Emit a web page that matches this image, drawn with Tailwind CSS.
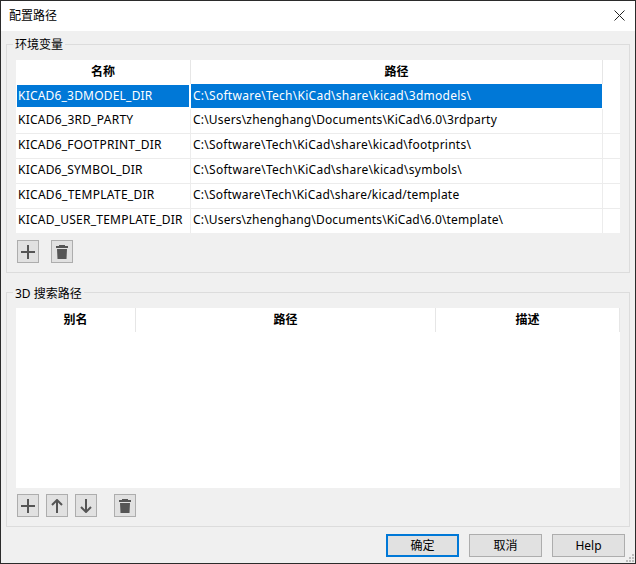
<!DOCTYPE html>
<html lang="zh-CN">
<head>
<meta charset="UTF-8">
<title>配置路径</title>
<script src="https://cdn.jsdelivr.net/npm/@tailwindcss/browser@4"></script>
</head>
<body class="m-0 overflow-hidden">
<div class="w-[636px] h-[564px] flex flex-col bg-[#f0f0f0] border border-[#2b2b2b] text-[12px] text-black font-['Noto_Sans','Noto_Sans_CJK_SC',sans-serif] relative">
  <!-- title bar -->
  <div class="h-[30px] bg-white flex items-center justify-between pl-[8px] pr-[10px] shrink-0">
    <span class="text-[12px]">配置路径</span>
    <svg class="mb-[1px]" width="11" height="11" viewBox="0 0 11 11" fill="none" stroke="#222" stroke-width="1"><path d="M0.5 0.5 10.5 10.5M10.5 0.5 0.5 10.5"/></svg>
  </div>

  <div class="flex flex-col pl-[5px] pr-[5px] pt-[13px]">
    <!-- env vars -->
    <div class="relative h-[229px] border border-[#dcdcdc] pl-[9px] pt-[15px]">
      <span class="absolute left-[6px] top-[-8px] bg-[#f0f0f0] px-[2px] leading-[16px]">环境变量</span>
      <div class="w-[604px] h-[173px] bg-white flex flex-col">
        <div class="h-[24px] grid grid-cols-[175px_412px] font-bold text-center leading-[24px]">
          <div class="border-r border-[#e6e6e6]">名称</div>
          <div class="border-r border-[#e6e6e6]">路径</div>
        </div>
        <div class="h-[25px] grid grid-cols-[175px_412px] leading-[22px] text-white">
          <div class="ml-[1px] mr-[2px] mt-[1px] h-[22px] bg-[#0078d7] pl-[1px] tracking-[0.2px]">KICAD6_3DMODEL_DIR</div>
          <div class="h-[24px] mr-[1px] bg-[#0078d7] pl-[2px] leading-[23px] tracking-[0.27px]">C:\Software\Tech\KiCad\share\kicad\3dmodels\</div>
        </div>
        <div class="h-[25px] grid grid-cols-[175px_412px] leading-[22px] border-b border-[#ececec]">
          <div class="border-r border-[#ececec] pl-[2px] tracking-[0.25px]">KICAD6_3RD_PARTY</div>
          <div class="border-r border-[#ececec] pl-[2px] tracking-[0.18px]">C:\Users\zhenghang\Documents\KiCad\6.0\3rdparty</div>
        </div>
        <div class="h-[25px] grid grid-cols-[175px_412px] leading-[22px] border-b border-[#ececec]">
          <div class="border-r border-[#ececec] pl-[2px] tracking-[0.23px]">KICAD6_FOOTPRINT_DIR</div>
          <div class="border-r border-[#ececec] pl-[2px] tracking-[0.25px]">C:\Software\Tech\KiCad\share\kicad\footprints\</div>
        </div>
        <div class="h-[25px] grid grid-cols-[175px_412px] leading-[22px] border-b border-[#ececec]">
          <div class="border-r border-[#ececec] pl-[2px] tracking-[0.22px]">KICAD6_SYMBOL_DIR</div>
          <div class="border-r border-[#ececec] pl-[2px] tracking-[0.27px]">C:\Software\Tech\KiCad\share\kicad\symbols\</div>
        </div>
        <div class="h-[25px] grid grid-cols-[175px_412px] leading-[22px] border-b border-[#ececec]">
          <div class="border-r border-[#ececec] pl-[2px] tracking-[0.28px]">KICAD6_TEMPLATE_DIR</div>
          <div class="border-r border-[#ececec] pl-[2px] tracking-[0.22px]">C:\Software\Tech\KiCad\share/kicad/template</div>
        </div>
        <div class="h-[24px] grid grid-cols-[175px_412px] leading-[22px]">
          <div class="border-r border-[#ececec] pl-[2px] tracking-[0.24px]">KICAD_USER_TEMPLATE_DIR</div>
          <div class="border-r border-[#ececec] pl-[2px] tracking-[0.17px]">C:\Users\zhenghang\Documents\KiCad\6.0\template\</div>
        </div>
      </div>
      <div class="flex gap-[12px] mt-[7px] ml-[1px]">
        <button class="w-[22px] h-[23px] bg-[#e1e1e1] border border-[#adadad] flex items-center justify-center">
          <svg width="14" height="14" viewBox="0 0 14 14" stroke="#555" stroke-width="2" fill="none"><path d="M7 0V14M0 7H14"/></svg>
        </button>
        <button class="w-[22px] h-[23px] bg-[#e1e1e1] border border-[#adadad] flex items-center justify-center">
          <svg width="12" height="14" viewBox="0 0 12 14" fill="#555"><path d="M3 0H9V1H12V3H0V1H3ZM1 4H11L10.5 14H1.5Z"/></svg>
        </button>
      </div>
    </div>

    <!-- 3D paths -->
    <div class="relative mt-[19px] h-[235px] border border-[#dcdcdc] pl-[9px] pt-[15px]">
      <span class="absolute left-[6px] top-[-7px] bg-[#f0f0f0] px-[2px] leading-[16px]">3D 搜索路径</span>
      <div class="w-[604px] h-[180px] bg-white">
        <div class="h-[24px] grid grid-cols-[120px_300px_184px] font-bold text-center leading-[24px]">
          <div class="border-r border-[#e6e6e6]">别名</div>
          <div class="border-r border-[#e6e6e6]">路径</div>
          <div class="border-r border-[#e6e6e6]">描述</div>
        </div>
      </div>
      <div class="flex mt-[6px] ml-[1px]">
        <button class="w-[22px] h-[23px] bg-[#e1e1e1] border border-[#adadad] flex items-center justify-center">
          <svg width="14" height="14" viewBox="0 0 14 14" stroke="#555" stroke-width="2" fill="none"><path d="M7 0V14M0 7H14"/></svg>
        </button>
        <button class="w-[22px] h-[23px] ml-[7px] bg-[#e1e1e1] border border-[#adadad] flex items-center justify-center">
          <svg width="12" height="14" viewBox="0 0 12 14" stroke="#555" stroke-width="2" fill="none"><path d="M6 14V1M1 6 6 1 11 6"/></svg>
        </button>
        <button class="w-[22px] h-[23px] ml-[7px] bg-[#e1e1e1] border border-[#adadad] flex items-center justify-center">
          <svg width="12" height="14" viewBox="0 0 12 14" stroke="#555" stroke-width="2" fill="none"><path d="M6 0V13M1 8 6 13 11 8"/></svg>
        </button>
        <button class="w-[22px] h-[23px] ml-[17px] bg-[#e1e1e1] border border-[#adadad] flex items-center justify-center">
          <svg width="12" height="14" viewBox="0 0 12 14" fill="#555"><path d="M3 0H9V1H12V3H0V1H3ZM1 4H11L10.5 14H1.5Z"/></svg>
        </button>
      </div>
    </div>
  </div>

  <!-- dialog buttons -->
  <div class="flex justify-end gap-[10px] pr-[10px] mt-[7px]">
    <button class="w-[73px] h-[23px] bg-[#e1e1e1] border-2 border-[#0078d7]">确定</button>
    <button class="w-[73px] h-[23px] bg-[#e1e1e1] border border-[#adadad]">取消</button>
    <button class="w-[73px] h-[23px] bg-[#e1e1e1] border border-[#adadad]">Help</button>
  </div>
  <svg class="absolute right-0 bottom-0" width="9" height="9" viewBox="0 0 9 9" fill="#bdbdbd"><path d="M6 0H8V2H6ZM3 3H5V5H3ZM6 3H8V5H6ZM0 6H2V8H0ZM3 6H5V8H3ZM6 6H8V8H6Z"/></svg>
</div>
</body>
</html>
